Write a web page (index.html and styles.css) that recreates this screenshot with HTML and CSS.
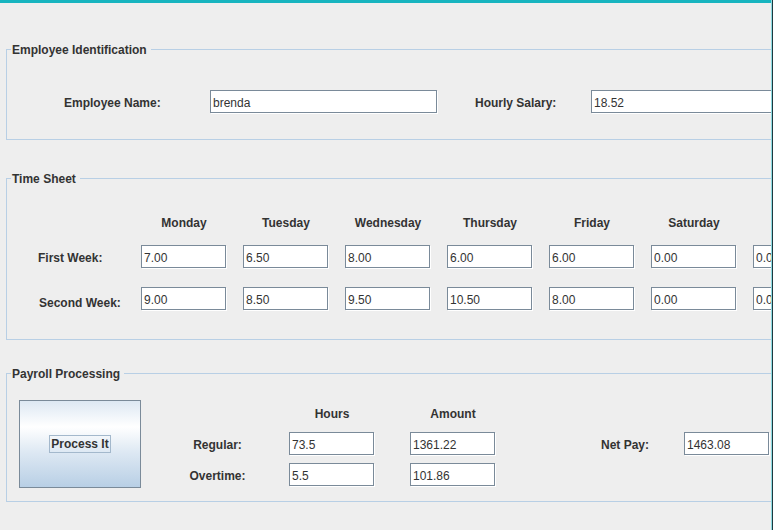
FILE: index.html
```html
<!DOCTYPE html>
<html>
<head>
<meta charset="utf-8">
<title>Payroll</title>
<link rel="stylesheet" href="styles.css">
</head>
<body>
<div class="topbar"></div>
<div class="frame">
  <section class="group g-ident">
    <h2 class="title">Employee Identification</h2>
    <div class="ident-row">
      <label class="lbl name-lbl">Employee Name:</label>
      <input class="field wide" type="text" value="brenda">
      <label class="lbl sal-lbl">Hourly Salary:</label>
      <input class="field wide" type="text" value="18.52">
    </div>
  </section>

  <section class="group g-time">
    <h2 class="title">Time Sheet</h2>
    <div class="time-grid">
      <span class="day">Monday</span>
      <span class="day">Tuesday</span>
      <span class="day">Wednesday</span>
      <span class="day">Thursday</span>
      <span class="day">Friday</span>
      <span class="day">Saturday</span>

      <label class="lbl week w1">First Week:</label>
      <input class="field row-a" type="text" value="7.00">
      <input class="field row-a" type="text" value="6.50">
      <input class="field row-a" type="text" value="8.00">
      <input class="field row-a" type="text" value="6.00">
      <input class="field row-a" type="text" value="6.00">
      <input class="field row-a" type="text" value="0.00">
      <input class="field row-a" type="text" value="0.00">

      <label class="lbl week w2">Second Week:</label>
      <input class="field row-b" type="text" value="9.00">
      <input class="field row-b" type="text" value="8.50">
      <input class="field row-b" type="text" value="9.50">
      <input class="field row-b" type="text" value="10.50">
      <input class="field row-b" type="text" value="8.00">
      <input class="field row-b" type="text" value="0.00">
      <input class="field row-b" type="text" value="0.00">
    </div>
  </section>

  <section class="group g-pay">
    <h2 class="title">Payroll Processing</h2>
    <div class="pay-body">
      <button class="process" type="button"><span class="focus">Process It</span></button>
      <div class="pay-grid">
        <span class="lbl head c-hrs">Hours</span>
        <span class="lbl head c-amt">Amount</span>

        <label class="lbl c-lab r1">Regular:</label>
        <input class="field c-hrs r1" type="text" value="73.5">
        <input class="field c-amt r1" type="text" value="1361.22">
        <label class="lbl c-nlab r1">Net Pay:</label>
        <input class="field c-nfld r1" type="text" value="1463.08">

        <label class="lbl c-lab r2">Overtime:</label>
        <input class="field c-hrs r2" type="text" value="5.5">
        <input class="field c-amt r2" type="text" value="101.86">
      </div>
    </div>
  </section>
</div>
<div class="edge"></div>
</body>
</html>
```

FILE: styles.css
```css
html, body {
  margin: 0;
  padding: 0;
  background: #eeeeee;
  width: 773px;
  height: 530px;
  overflow: hidden;
}

body {
  position: relative;
  font-family: "Liberation Sans", Arial, sans-serif;
  font-size: 12px;
  color: #333333;
}

.topbar {
  height: 3px;
  background: #17b4bf;
}

.frame {
  width: 1000px;
  padding-left: 6px;
}

.group {
  width: 900px;
  border: 1px solid #b8cfe5;
}

.title {
  display: block;
  width: fit-content;
  margin: -7px 0 0 4px;
  padding: 0 4px 0 1px;
  background: #eeeeee;
  font-size: 12px;
  font-weight: bold;
  line-height: 14px;
  height: 14px;
  color: #333333;
}

.lbl {
  font-weight: bold;
  font-size: 12px;
  line-height: 14px;
  color: #333333;
  white-space: nowrap;
}

.field {
  box-sizing: border-box;
  width: 85px;
  height: 23px;
  margin: 0 1px 1px 0;
  padding: 2px 1px 0 2px;
  border: 1px solid #7a8a99;
  box-shadow: 1px 1px 0 #ffffff;
  background: #ffffff;
  font-family: "Liberation Sans", Arial, sans-serif;
  font-size: 12px;
  color: #333333;
  outline: none;
}

/* Employee identification */
.g-ident {
  margin-top: 46px;
  padding-bottom: 25px;
}

.ident-row {
  display: flex;
  align-items: center;
  height: 24px;
  margin-top: 33px;
  padding-left: 57px;
}

.ident-row .lbl { padding-top: 2px; }

.name-lbl { width: 146px; }
.sal-lbl { width: 116px; margin-left: 37px; }
.field.wide { width: 227px; }

/* Time sheet */
.g-time {
  margin-top: 38px;
  padding-bottom: 28px;
}

.time-grid {
  display: grid;
  grid-template-columns: 118px repeat(7, 86px);
  grid-template-rows: 14px 16px 24px 18px 24px;
  column-gap: 16px;
  margin-top: 29px;
}

.day {
  grid-row: 1;
  font-weight: bold;
  line-height: 14px;
  text-align: center;
  padding-top: 1px;
}

.day:nth-child(1) { grid-column: 2; }
.day:nth-child(2) { grid-column: 3; }
.day:nth-child(3) { grid-column: 4; }
.day:nth-child(4) { grid-column: 5; }
.day:nth-child(5) { grid-column: 6; }
.day:nth-child(6) { grid-column: 7; }

.row-a { grid-row: 3; }
.row-b { grid-row: 5; }

.week {
  grid-column: 1;
  align-self: center;
  padding-left: 31px;
}

.w1 { grid-row: 3; margin-top: 2px; }
.w2 { grid-row: 5; padding-left: 32px; margin-top: 7px; }

/* Payroll */
.g-pay {
  margin-top: 33px;
  padding-bottom: 13px;
}

.pay-body {
  display: flex;
  align-items: flex-start;
  margin-top: 19px;
  padding-left: 12px;
}

.process {
  box-sizing: border-box;
  width: 122px;
  height: 88px;
  margin: 0;
  padding: 0;
  border: 1px solid #7a8a99;
  background: linear-gradient(to bottom, #dde8f3 0%, #ffffff 30%, #dde8f3 60%, #b8cfe5 100%);
  font-family: "Liberation Sans", Arial, sans-serif;
  font-size: 12px;
  font-weight: bold;
  color: #333333;
  display: flex;
  align-items: center;
  justify-content: center;
}

.focus {
  display: block;
  border: 1px solid #a3b8cc;
  padding: 1px 1px 0;
  line-height: 15px;
}

.pay-grid {
  display: grid;
  grid-template-columns: [lab] 95px 24px [hrs] 86px 35px [amt] 86px 84px [nlab] 90px 14px [nfld] 86px;
  grid-template-rows: 19px 24px 24px;
  row-gap: 7px;
  margin-top: 6px;
  margin-left: 29px;
}

.head {
  grid-row: 1;
  text-align: center;
  align-self: start;
  padding-top: 1px;
}

.c-lab { grid-column: lab; text-align: center; align-self: center; padding-top: 2px; }
.c-hrs { grid-column: hrs; }
.c-amt { grid-column: amt; }
.c-nlab { grid-column: nlab; text-align: center; align-self: center; padding-top: 2px; }
.c-nfld { grid-column: nfld; }
.r1 { grid-row: 2; }
.r2 { grid-row: 3; }

.edge {
  position: absolute;
  top: 0;
  right: 0;
  width: 2px;
  height: 530px;
  background: linear-gradient(to right, #8edbe2 0 1px, #1d3a40 1px 2px);
}
```
